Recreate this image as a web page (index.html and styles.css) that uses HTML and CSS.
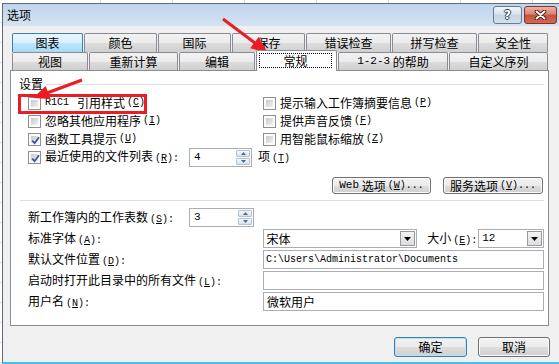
FILE: index.html
```html
<!DOCTYPE html>
<html lang="zh-CN">
<head>
    <meta charset="UTF-8">
    <meta name="viewport" content="width=device-width, initial-scale=1.0">
    <title>选项</title>
    <link rel="stylesheet" href="styles.css">
</head>
<body>
<div class="desk-top"></div>
<div class="desk">
    <div class="desk-left"></div>
    <div class="window">
        <div class="titlebar">
            <span class="title">选项</span>
            <div class="caption">
                <span class="cap-btn help">?</span>
                <span class="cap-btn close">
                    <svg width="13" height="10" viewBox="0 0 13 10">
                        <path d="M2.5 1.5 L10.5 8.5 M10.5 1.5 L2.5 8.5" stroke="#4b1a14" stroke-width="3.8" stroke-linecap="round"/>
                        <path d="M2.5 1.5 L10.5 8.5 M10.5 1.5 L2.5 8.5" stroke="#fff" stroke-width="2" stroke-linecap="round"/>
                    </svg>
                </span>
            </div>
        </div>

        <div class="dialog-body">
            <div class="tabs">
                <div class="tab-row row1">
                    <div class="tab hot">图表</div>
                    <div class="tab">颜色</div>
                    <div class="tab">国际</div>
                    <div class="tab">保存</div>
                    <div class="tab">错误检查</div>
                    <div class="tab">拼写检查</div>
                    <div class="tab">安全性</div>
                </div>
                <div class="tab-row row2">
                    <div class="tab">视图</div>
                    <div class="tab">重新计算</div>
                    <div class="tab">编辑</div>
                    <div class="tab selected"><span class="focus">常规</span></div>
                    <div class="tab"><span class="mono">1-2-3</span>&nbsp;的帮助</div>
                    <div class="tab">自定义序列</div>
                </div>
            </div>

            <div class="panel">
                <div class="group-head">设置</div>

                <div class="checks">
                    <label class="check"><span class="box"></span><span class="mono small">R1C1</span><span class="after-code">引用样式</span><span class="key">(<u>C</u>)</span></label>
                    <label class="check"><span class="box"></span>提示输入工作簿摘要信息<span class="key">(<u>P</u>)</span></label>
                    <label class="check"><span class="box"></span>忽略其他应用程序<span class="key">(<u>I</u>)</span></label>
                    <label class="check"><span class="box"></span>提供声音反馈<span class="key">(<u>F</u>)</span></label>
                    <label class="check"><span class="box checked"><svg width="9" height="9" viewBox="0 0 9 9"><path d="M1.2 4.6 L3.6 7.2 L8 1.2" fill="none" stroke="#3a56a0" stroke-width="1.8"/></svg></span>函数工具提示<span class="key">(<u>U</u>)</span></label>
                    <label class="check"><span class="box"></span>用智能鼠标缩放<span class="key">(<u>Z</u>)</span></label>
                    <div class="check recent">
                        <span class="box checked"><svg width="9" height="9" viewBox="0 0 9 9"><path d="M1.2 4.6 L3.6 7.2 L8 1.2" fill="none" stroke="#3a56a0" stroke-width="1.8"/></svg></span>
                        <span class="recent-label">最近使用的文件列表<span class="key">(<u>R</u>):</span></span>
                        <span class="spin">
                            <span class="spin-val mono">4</span>
                            <span class="spin-btns">
                                <span class="spin-half"><svg width="5" height="3" viewBox="0 0 5 3"><path d="M0 3H5L2.5 0z" fill="#4e6a92"/></svg></span>
                                <span class="spin-half"><svg width="5" height="3" viewBox="0 0 5 3"><path d="M0 0H5L2.5 3z" fill="#4e6a92"/></svg></span>
                            </span>
                        </span>
                        <span class="unit">项<span class="key">(<u>T</u>)</span></span>
                    </div>
                </div>

                <div class="more-buttons">
                    <span class="btn web-btn"><span class="mono">Web</span>&nbsp;选项<span class="key">(<u>W</u>)...</span></span>
                    <span class="btn svc-btn">服务选项<span class="key">(<u>V</u>)...</span></span>
                </div>

                <div class="separator"></div>

                <div class="form">
                    <div class="form-row">
                        <span class="form-label short">新工作簿内的工作表数<span class="key">(<u>S</u>):</span></span>
                        <span class="spin sheets">
                            <span class="spin-val mono">3</span>
                            <span class="spin-btns">
                                <span class="spin-half"><svg width="5" height="3" viewBox="0 0 5 3"><path d="M0 3H5L2.5 0z" fill="#4e6a92"/></svg></span>
                                <span class="spin-half"><svg width="5" height="3" viewBox="0 0 5 3"><path d="M0 0H5L2.5 3z" fill="#4e6a92"/></svg></span>
                            </span>
                        </span>
                    </div>
                    <div class="form-row">
                        <span class="form-label">标准字体<span class="key">(<u>A</u>):</span></span>
                        <span class="field combo font-combo">
                            <span class="combo-val">宋体</span>
                            <span class="drop"><svg width="7" height="4" viewBox="0 0 7 4"><path d="M0 0H7L3.5 4z" fill="#000"/></svg></span>
                        </span>
                        <span class="size-label">大小<span class="key">(<u>E</u>):</span></span>
                        <span class="field combo size-combo">
                            <span class="combo-val mono">12</span>
                            <span class="drop"><svg width="7" height="4" viewBox="0 0 7 4"><path d="M0 0H7L3.5 4z" fill="#000"/></svg></span>
                        </span>
                    </div>
                    <div class="form-row">
                        <span class="form-label">默认文件位置<span class="key">(<u>D</u>):</span></span>
                        <span class="field wide path">C:\Users\Administrator\Documents</span>
                    </div>
                    <div class="form-row">
                        <span class="form-label">启动时打开此目录中的所有文件<span class="key">(<u>L</u>):</span></span>
                        <span class="field wide"></span>
                    </div>
                    <div class="form-row">
                        <span class="form-label">用户名<span class="key">(<u>N</u>):</span></span>
                        <span class="field wide">微软用户</span>
                    </div>
                </div>
            </div>

            <div class="dialog-buttons">
                <span class="dlg-btn default">确定</span>
                <span class="dlg-btn cancel">取消</span>
            </div>
        </div>
    </div>
</div>

<svg class="marks" width="559" height="364" viewBox="0 0 559 364">
    <rect x="19.5" y="95.5" width="126" height="17" fill="none" stroke="#ec1c24" stroke-width="3"/>
    <path d="M82 80 L47 93" stroke="#ec1c24" stroke-width="3"/>
    <polygon points="33,98 50.5,99.1 45.7,85.9" fill="#ec1c24"/>
    <path d="M223 19 L255 43" stroke="#ec1c24" stroke-width="3"/>
    <polygon points="268,53 250.2,48.3 258.6,37.1" fill="#ec1c24"/>
</svg>
</body>
</html>
```

FILE: styles.css
```css
* {
    box-sizing: border-box;
}

body {
    margin: 0;
    width: 559px;
    height: 364px;
    overflow: hidden;
    position: relative;
    background-color: #fff;
    font-family: "Noto Sans CJK SC", sans-serif;
    font-size: 12px;
    line-height: 1;
    color: #000;
}

.mono {
    font-family: "Liberation Mono", "DejaVu Sans Mono", monospace;
    font-size: 11px;
}

.mono.small {
    font-size: 10px;
}

.after-code {
    margin-left: 4px;
}

.key {
    font-family: "Liberation Mono", "DejaVu Sans Mono", monospace;
    font-size: 10px;
    margin-left: 2px;
}

.check .key {
    margin-left: -2px;
}

/* excel sheet behind the dialog */
.desk-top {
    height: 3px;
    margin-left: 100px;
    background: repeating-linear-gradient(to right, #d6dbe4 0 1px, transparent 1px 72px);
}

.desk {
    display: flex;
}

.desk-left {
    width: 2px;
    background: repeating-linear-gradient(to bottom, transparent 0 19px, #d6dbe4 19px 20px);
}

/* window frame */
.window {
    flex: 1;
    height: 361px;
    display: flex;
    flex-direction: column;
    border-left: 1px solid #5f6b78;
    border-top: 1px solid #5f6b78;
    border-bottom: 2px solid #44c0ea;
    background-color: #f0f0f0;
}

.titlebar {
    height: 22px;
    display: flex;
    align-items: flex-start;
    padding: 0 2px 0 4px;
    background: linear-gradient(#bfd4ec, #d5e3f2);
}

.title {
    flex: 1;
    padding-top: 5px;
}

.caption {
    display: flex;
    gap: 2px;
    margin-top: 2px;
}

.cap-btn {
    height: 18px;
    border-radius: 3px;
    display: flex;
    align-items: center;
    justify-content: center;
}

.help {
    width: 29px;
    border: 1px solid #6b7a8e;
    background: linear-gradient(#f0f5fa, #d9e3ee 45%, #c5d3e3 50%, #d2dfec);
    color: #fff;
    font: bold 12px "DejaVu Sans", sans-serif;
    text-shadow: 1px 0 0 #2d3f57, -1px 0 0 #2d3f57, 0 1px 0 #2d3f57, 0 -1px 0 #2d3f57;
}

.close {
    width: 33px;
    border: 1px solid #843127;
    background: linear-gradient(#eab3a8, #d98472 45%, #c4513b 50%, #d06a53);
}

/* dialog */
.dialog-body {
    flex: 1;
    padding: 7px 0 0 7px;
}

.tabs {
    margin-left: 2px;
}

.tab-row {
    display: flex;
    gap: 1px;
    align-items: flex-start;
}

.row1 {
    height: 19px;
}

.row2 {
    height: 18px;
}

.tab {
    height: 100%;
    border: 1px solid #898c95;
    border-bottom: 0;
    border-radius: 2px 2px 0 0;
    background: linear-gradient(#f2f2f2, #ebebeb 50%, #dddddd 51%, #cfcfcf);
    display: flex;
    align-items: center;
    justify-content: center;
    white-space: nowrap;
}

.row1 .tab:nth-child(1) { width: 71px; }
.row1 .tab:nth-child(2) { width: 73px; }
.row1 .tab:nth-child(3) { width: 73px; }
.row1 .tab:nth-child(4) { width: 73px; }
.row1 .tab:nth-child(5) { width: 85px; }
.row1 .tab:nth-child(6) { width: 85px; }
.row1 .tab:nth-child(7) { width: 70px; }

.row2 .tab:nth-child(1) { width: 76px; }
.row2 .tab:nth-child(2) { width: 89px; }
.row2 .tab:nth-child(3) { width: 76px; }
.row2 .tab:nth-child(4) { width: 81px; }
.row2 .tab:nth-child(5) { width: 110px; }
.row2 .tab:nth-child(6) { width: 99px; }

.tab.hot {
    border-color: #3c7fb1;
    background: linear-gradient(#eaf6fd, #d9f0fc 50%, #bee6fd 51%, #a7d9f5);
}

.tab.selected {
    height: 21px;
    margin-top: -2px;
    position: relative;
    z-index: 1;
    background: #fff;
    padding: 2px 4px 3px 2px;
    align-items: stretch;
}

.focus {
    flex: 1;
    border: 1px dotted #000;
    display: flex;
    align-items: center;
    justify-content: center;
}

.panel {
    width: 539px;
    height: 256px;
    border: 1px solid #898c95;
    background-color: #fff;
}

.group-head {
    display: flex;
    align-items: center;
    height: 14px;
    margin-top: 6px;
    padding: 0 4px 0 8px;
}

.group-head::after {
    content: "";
    flex: 1;
    border-top: 1px solid #d5dfe5;
    margin-left: 3px;
}

.checks {
    display: grid;
    grid-template-columns: 235px 1fr;
    grid-auto-rows: 18px;
    margin-top: 3px;
    padding-left: 17px;
}

.check {
    display: flex;
    align-items: center;
    gap: 4px;
    white-space: nowrap;
}

.recent {
    grid-column: 1 / 3;
}

.recent .key {
    margin-left: 2px;
}

.box {
    width: 13px;
    height: 13px;
    padding: 2px;
    border: 1px solid #8e8f8f;
    background: linear-gradient(135deg, #c6c9cd, #f0f0f0) content-box, #fbfbfb;
    flex: none;
}

.box svg {
    display: block;
}

.recent-label {
    width: 140px;
}

.spin {
    width: 63px;
    height: 19px;
    border: 1px solid #abadb3;
    background: #fff;
    display: flex;
}

.spin.sheets {
    width: 65px;
}

.spin-val {
    flex: 1;
    padding-left: 4px;
    display: flex;
    align-items: center;
}

.spin-btns {
    width: 14px;
    margin: 1px;
    display: flex;
    flex-direction: column;
    gap: 1px;
}

.spin-half {
    flex: 1;
    border: 1px solid #b5c2d3;
    border-radius: 1px;
    background: linear-gradient(#f4f8fc, #d6e2ef);
    display: flex;
    align-items: center;
    justify-content: center;
}

.spin-half svg {
    display: block;
}

.unit {
    margin-left: 2px;
}

.more-buttons {
    display: flex;
    justify-content: flex-end;
    gap: 12px;
    margin-top: 11px;
    padding-right: 5px;
}

.btn,
.dlg-btn {
    border: 1px solid #707070;
    border-radius: 3px;
    background: linear-gradient(#f2f2f2, #ebebeb 50%, #dddddd 51%, #cfcfcf);
    box-shadow: inset 0 0 0 1px #fbfbfb;
    display: flex;
    align-items: center;
    justify-content: center;
    white-space: nowrap;
}

.btn {
    height: 17px;
}

.web-btn {
    width: 99px;
}

.svc-btn {
    width: 100px;
}

.separator {
    border-top: 1px solid #d5dfe5;
    margin: 6px 4px 0 9px;
}

.form {
    margin-top: 6px;
    padding: 0 4px 0 17px;
}

.form-row {
    display: flex;
    align-items: center;
    height: 21px;
}

.form-label {
    width: 235px;
    white-space: nowrap;
}

.form-label.short {
    width: 161px;
}

.field {
    height: 19px;
    border: 1px solid #abadb3;
    background: #fff;
    display: flex;
    align-items: center;
    padding-left: 3px;
    white-space: nowrap;
}

.wide {
    width: 281px;
}

.path {
    font-family: "Liberation Mono", "DejaVu Sans Mono", monospace;
    font-size: 10px;
    padding-left: 2px;
}

.combo {
    padding-right: 1px;
}

.combo-val {
    flex: 1;
}

.font-combo {
    width: 155px;
}

.size-combo {
    width: 66px;
}

.size-label {
    width: 51px;
    margin-left: 10px;
    white-space: nowrap;
}

.drop {
    width: 15px;
    height: 15px;
    border: 1px solid #9a9a9a;
    background: linear-gradient(#f4f4f4, #dcdcdc);
    display: flex;
    align-items: center;
    justify-content: center;
}

.dialog-buttons {
    display: flex;
    justify-content: flex-end;
    gap: 11px;
    margin-top: 11px;
    padding-right: 9px;
}

.dlg-btn {
    width: 73px;
    height: 20px;
}

.dlg-btn.cancel {
    width: 72px;
}

.dlg-btn.default {
    border-color: #3c7fb1;
    box-shadow: inset 0 0 0 1px #b6e3fa;
}

/* red annotations drawn over the dialog */
.marks {
    position: absolute;
    top: 0;
    left: 0;
    pointer-events: none;
}
```
